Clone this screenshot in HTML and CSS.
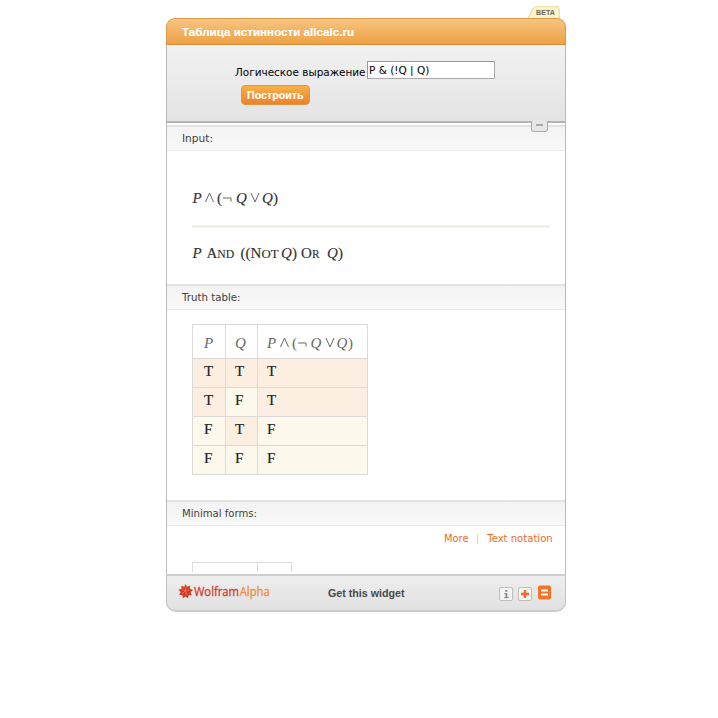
FILE: index.html
```html
<!DOCTYPE html>
<html lang="ru">
<head>
<meta charset="utf-8">
<title>Таблица истинности allcalc.ru</title>
<link rel="stylesheet" href="styles.css">
</head>
<body>
<main class="widget">
  <svg class="beta" width="34" height="13" viewBox="0 0 34 13"><path d="M.5 13 6 2.5Q7 .7 9 .7H30Q32.3.7 32.3 3V13" fill="#fbf3ca" stroke="#eadb9c"/><text x="9" y="9.3" textLength="19" lengthAdjust="spacingAndGlyphs">BETA</text></svg>
  <header class="title"><svg width="180" height="18"><text x="0" y="12.5" textLength="172" lengthAdjust="spacingAndGlyphs">Таблица истинности allcalc.ru</text></svg></header>
  <form class="form">
    <div class="field">
      <label for="expr"><svg width="131" height="18"><text x="0" y="12.6" textLength="130.5" lengthAdjust="spacingAndGlyphs">Логическое выражение</text></svg></label>
      <input id="expr" type="text" value="P &amp; (!Q | Q)">
    </div>
    <button class="submit" type="button"><svg width="57" height="17"><text x="0" y="12" textLength="56.5" lengthAdjust="spacingAndGlyphs">Построить</text></svg></button>
    <span class="collapse"></span>
  </form>
  <div class="results">
    <section class="pod input">
      <h2><svg width="100" height="18"><text x="0" y="12" textLength="31" lengthAdjust="spacingAndGlyphs">Input:</text></svg></h2>
      <svg class="math" width="358" height="133" viewBox="0 0 358 133">
        <g class="formula"><text class="i" x=".5" y="51.5">P</text><path class="op" d="M13.5 51 17.5 42 21.5 51M31 47H39V50.5M59 42 63 51 67 42"/><text x="25" y="51.5">(</text><text class="i" x="44" y="51.5">Q</text><text class="i" x="70" y="51.5">Q</text><text x="81" y="51.5">)</text></g>
        <path d="M0 75.5H358" stroke="#eeebdc" stroke-width="2"/>
        <g class="formula"><text class="i" x=".5" y="106.5">P</text><text x="14.5" y="106.5">A<tspan class="sc" textLength="17" lengthAdjust="spacingAndGlyphs">ND</tspan></text><text x="48.5" y="106.5">((N<tspan class="sc" textLength="17" x="69.5" lengthAdjust="spacingAndGlyphs">OT</tspan></text><text class="i" x="89" y="106.5">Q</text><text x="100" y="106.5">)</text><text x="109" y="106.5">O<tspan class="sc" x="120">R</tspan></text><text class="i" x="135" y="106.5">Q</text><text x="146" y="106.5">)</text></g>
      </svg>
    </section>
    <section class="pod truth">
      <h2><svg width="100" height="18"><text x="0" y="12" textLength="58.5" lengthAdjust="spacingAndGlyphs">Truth table:</text></svg></h2>
      <table>
        <tr><th><i>P</i></th><th><i>Q</i></th><th><svg class="head" width="90" height="20" viewBox="0 0 90 20"><g class="formula"><text class="i" x="0" y="15">P</text><path class="op" d="M13.5 14 17.5 5 21.5 14M31 10H39V13.5M59 5 63 14 67 5"/><text x="25" y="15">(</text><text class="i" x="43.5" y="15">Q</text><text class="i" x="69.5" y="15">Q</text><text x="81" y="15">)</text></g></svg></th></tr>
        <tr><td class="t">T</td><td class="t">T</td><td class="t">T</td></tr>
        <tr><td class="t">T</td><td>F</td><td class="t">T</td></tr>
        <tr><td>F</td><td class="t">T</td><td>F</td></tr>
        <tr><td>F</td><td>F</td><td>F</td></tr>
      </table>
    </section>
    <section class="pod forms">
      <h2><svg width="100" height="18"><text x="0" y="12" textLength="75" lengthAdjust="spacingAndGlyphs">Minimal forms:</text></svg></h2>
      <div class="links"><svg width="110" height="18"><text x="0" y="12.5" textLength="24.5" lengthAdjust="spacingAndGlyphs">More</text><path d="M33.5 5V15" stroke="#d5d5d5"/><text x="43.2" y="12.5" textLength="65.5" lengthAdjust="spacingAndGlyphs">Text notation</text></svg></div>
      <div class="stub"><span></span><span></span></div>
    </section>
  </div>
  <footer>
    <svg width="398" height="36" viewBox="0 0 398 36">
      <path d="m18.5 8 1.6 2.7 3.1-1-.3 3 3.1 1.3-2.4 2.2 1.2 3-3.2.1-.7 3-2.4-1.7-2.6 1.7-.5-3.1-3.3-.4 1.5-2.7-2.3-2.3 3.2-1-.1-3.1 2.9 1z" fill="#d63d29"/>
      <path d="m15 13 3 2 1-4m-1 4 4-1m-4 1 2 4m-2-4-3 3" fill="none" stroke="#f17856" stroke-width=".7"/>
      <text class="logo" y="20" x="27" textLength="45" lengthAdjust="spacingAndGlyphs" fill="#d0392b" stroke="#d0392b">Wolfram</text><text class="logo" y="20" x="72.7" textLength="30" lengthAdjust="spacingAndGlyphs" fill="#ef8b3b" stroke="#ef8b3b">Alpha</text>
      <text class="get" x="161" y="20.5" textLength="76.5" lengthAdjust="spacingAndGlyphs">Get this widget</text>
      <g fill="#f5f5f5" stroke="#bdbdbd"><rect x="332.5" y="11.5" width="13" height="13" rx="1.5"/><rect x="351.5" y="11.5" width="13" height="13" rx="1.5"/></g>
      <path d="M338.2 14h2.2v1.8h-2.2zM337.3 17h3v4h1.2V22.3h-4.2V21h1.2v-2.7h-1.2z" fill="#888"/>
      <path d="M358 14v8M354 18h8" stroke="#f26b2a" stroke-width="2.5"/>
      <rect x="371" y="9.5" width="13" height="14" rx="2" fill="#f27429"/>
      <path d="M374 14.5h7M374 18.5h7" stroke="#fff" stroke-width="1.8"/>
    </svg>
  </footer>
</main>
</body>
</html>
```
FILE: styles.css
```css
* { box-sizing: border-box; }
body { margin: 0; background: #fff; font-family: "DejaVu Sans", sans-serif; }
svg { display: block; overflow: visible; }
.widget { position: relative; width: 400px; margin: 18px 0 0 166px; }
.beta { position: absolute; left: 361px; top: -12px; }
.beta text { font: bold 7px "Liberation Sans", sans-serif; fill: #6d6955; }
.title {
  position: relative;
  height: 27px;
  padding: 4px 15px;
  border: 1px solid #d99a4b;
  border-bottom-color: #d58d35;
  border-radius: 9px 9px 0 0;
  background: linear-gradient(#f7c581, #eea043);
}
.title text { font: bold 11.5px "Liberation Sans", sans-serif; fill: #fff; stroke: #fff; stroke-width: .15px; }
.form {
  position: relative;
  height: 78px;
  padding: 16px 0 0 68px;
  border: 1px solid #b9b9b9;
  border-top: 0;
  border-bottom: 2px solid #b5b5b5;
  background: linear-gradient(#f1f1f1, #e4e4e4);
}
.field { display: flex; height: 24px; }
.field label { width: 132px; padding-top: 2px; }
.field label text { font-size: 11px; fill: #000; }
.field input {
  width: 128px;
  height: 18px;
  padding: 0 1px;
  border: 1px solid #999;
  border-right-color: #aaa;
  border-bottom-color: #aaa;
  background: #fff;
  color: #000;
  font: 10.5px "DejaVu Sans", sans-serif;
}
.submit {
  display: block;
  width: 69px;
  height: 20px;
  margin-left: 6px;
  padding: 0 5px;
  border: 1px solid #df963c;
  border-radius: 4px;
  background: linear-gradient(#f8b147, #ee812d);
}
.submit text { font: bold 11px "Liberation Sans", sans-serif; fill: #fff; stroke: #fff; stroke-width: .15px; }
.collapse {
  position: absolute;
  z-index: 1;
  left: 364px;
  top: 76px;
  width: 17px;
  height: 11px;
  border: 1px solid #aaa;
  border-top: 0;
  border-radius: 0 0 3px 3px;
  background: linear-gradient(#aaa, #aaa) 4px 3px / 7px 2px no-repeat #e7e7e7;
}
.results { height: 451px; padding-top: 2px; overflow: hidden; border: solid #bbb; border-width: 0 1px; }
.pod h2 {
  height: 26px;
  margin: 0;
  padding: 3px 15px;
  border-top: 2px solid #e2e2e2;
  border-bottom: 1px solid #ebebeb;
  background: linear-gradient(#f3f3f3, #f8f8f8);
  font-weight: normal;
}
.pod h2 text { font-size: 10.5px; fill: #404040; }
.pod.input { height: 159px; }
.pod.truth { height: 216px; }
.math { margin-left: 25px; }
.formula { font: 15px "Liberation Serif", serif; fill: #333; }
.formula .i { font-style: italic; }
.formula .sc { font-size: 11.5px; }
.op { fill: none; stroke: #666; stroke-width: 1; }
.math text { stroke: #333; stroke-width: .15px; }
table {
  width: 176px;
  height: 151px;
  margin: 14px 0 0 25px;
  border-collapse: collapse;
  table-layout: fixed;
  font: 15px/18px "Liberation Serif", serif;
  color: #222;
}
th, td { height: 29px; padding: 0 0 4px 9px; border: 1px solid #dcdad7; text-align: left; vertical-align: middle; }
th { height: 34px; padding: 2px 0 0 11px; color: #666; font-weight: normal; }
th:nth-child(1) { width: 33px; }
th:nth-child(2) { width: 32px; padding-left: 9px; }
th:nth-child(3) { padding-left: 9px; }
td { padding-left: 11px; background: #fcf8ec; -webkit-text-stroke: .2px #222; }
td + td { padding-left: 9px; }
td.t { background: #fcefe1; }
.head .formula { fill: #666; }
.links { display: flex; justify-content: flex-end; height: 36px; padding: 3px 11px 0 0; }
.links text { font-size: 10.5px; fill: #ee6b2c; }
.stub { display: flex; width: 100px; height: 10px; margin-left: 25px; border: 1px solid #dcdcdc; border-bottom: 0; }
.stub span:first-child { width: 65px; border-right: 1px solid #dcdcdc; }
footer {
  height: 38px;
  border: 1px solid #c1c1c1;
  border-top: 2px solid #cecece;
  border-bottom: 2px solid #cbcbcb;
  border-radius: 0 0 10px 10px;
  background: linear-gradient(#eee, #e1e1e1);
}
.logo { font: 12.5px "Open Sans", sans-serif; stroke-width: .3px; }
.get { font: bold 11px "Liberation Sans", sans-serif; fill: #484848; }
```
